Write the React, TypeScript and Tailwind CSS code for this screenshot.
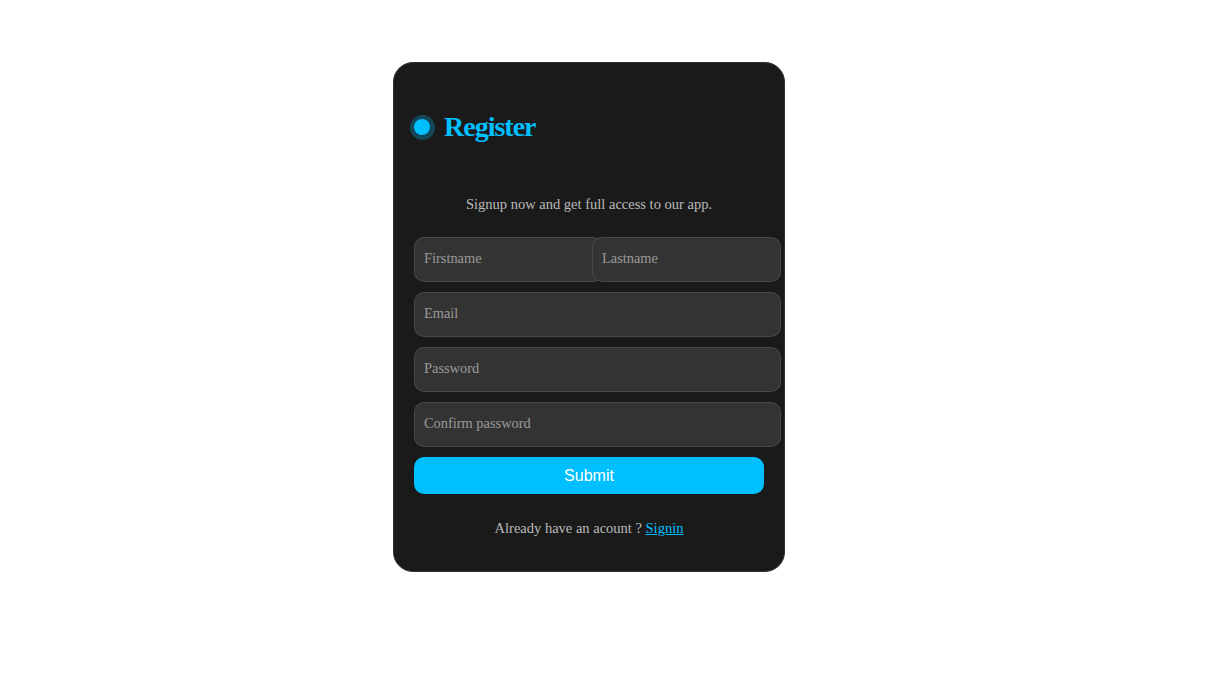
import React from "react";

const serif = { fontFamily: '"Liberation Serif", "Times New Roman", serif' };

function Field({ label, width }: { label: string; width: string }) {
  return (
    <div
      className={`relative h-[45px] ${width} shrink-0 rounded-[10px] border border-[rgba(105,105,105,0.4)] bg-[#333333]`}
    >
      <span
        className="absolute left-[9px] top-[12px] text-[14.4px] leading-[17px] text-[rgba(255,255,255,0.5)]"
        style={serif}
      >
        {label}
      </span>
    </div>
  );
}

export default function App() {
  return (
    <div className="min-h-[673px] w-full bg-white" style={serif}>
      <div className="pl-[393px] pt-[62px]">
        <div className="flex w-[392px] flex-col rounded-[20px] border border-[#333333] bg-[#1a1a1a] p-[20px] text-white">
          <div className="relative mt-[28px] flex h-[32px] items-center pl-[30px]">
            <div className="absolute left-[-4.5px] top-[3.5px] flex h-[25px] w-[25px] items-center justify-center rounded-full bg-[rgba(0,191,255,0.28)]">
              <div className="h-[16px] w-[16px] rounded-full bg-[#00bfff]" />
            </div>
            <span className="text-[28px] font-bold leading-[32px] tracking-[-1px] text-[#00bfff]">
              Register
            </span>
          </div>

          <p className="mt-[53px] text-center text-[14.5px] leading-[17px] text-[rgba(255,255,255,0.7)]">
            Signup now and get full access to our app.
          </p>

          <div className="mt-[24px] flex flex-col gap-[10px]">
            <div className="flex w-[350px] gap-[6px]">
              <div className="w-[172px] shrink-0">
                <Field label="Firstname" width="w-[189px]" />
              </div>
              <div className="w-[172px] shrink-0">
                <Field label="Lastname" width="w-[189px]" />
              </div>
            </div>
            <Field label="Email" width="w-[367px]" />
            <Field label="Password" width="w-[367px]" />
            <Field label="Confirm password" width="w-[367px]" />
          </div>

          <button
            className="mt-[10px] h-[37px] w-[350px] rounded-[10px] bg-[#00bfff] text-[16px] text-white"
            style={{ fontFamily: '"Liberation Sans", Arial, sans-serif' }}
          >
            Submit
          </button>

          <p className="mb-[14px] mt-[26px] text-center text-[14.5px] leading-[17px] text-[rgba(255,255,255,0.7)]">
            Already have an acount ?{" "}
            <a href="#" className="text-[#00bfff] underline">
              Signin
            </a>
          </p>
        </div>
      </div>
    </div>
  );
}
